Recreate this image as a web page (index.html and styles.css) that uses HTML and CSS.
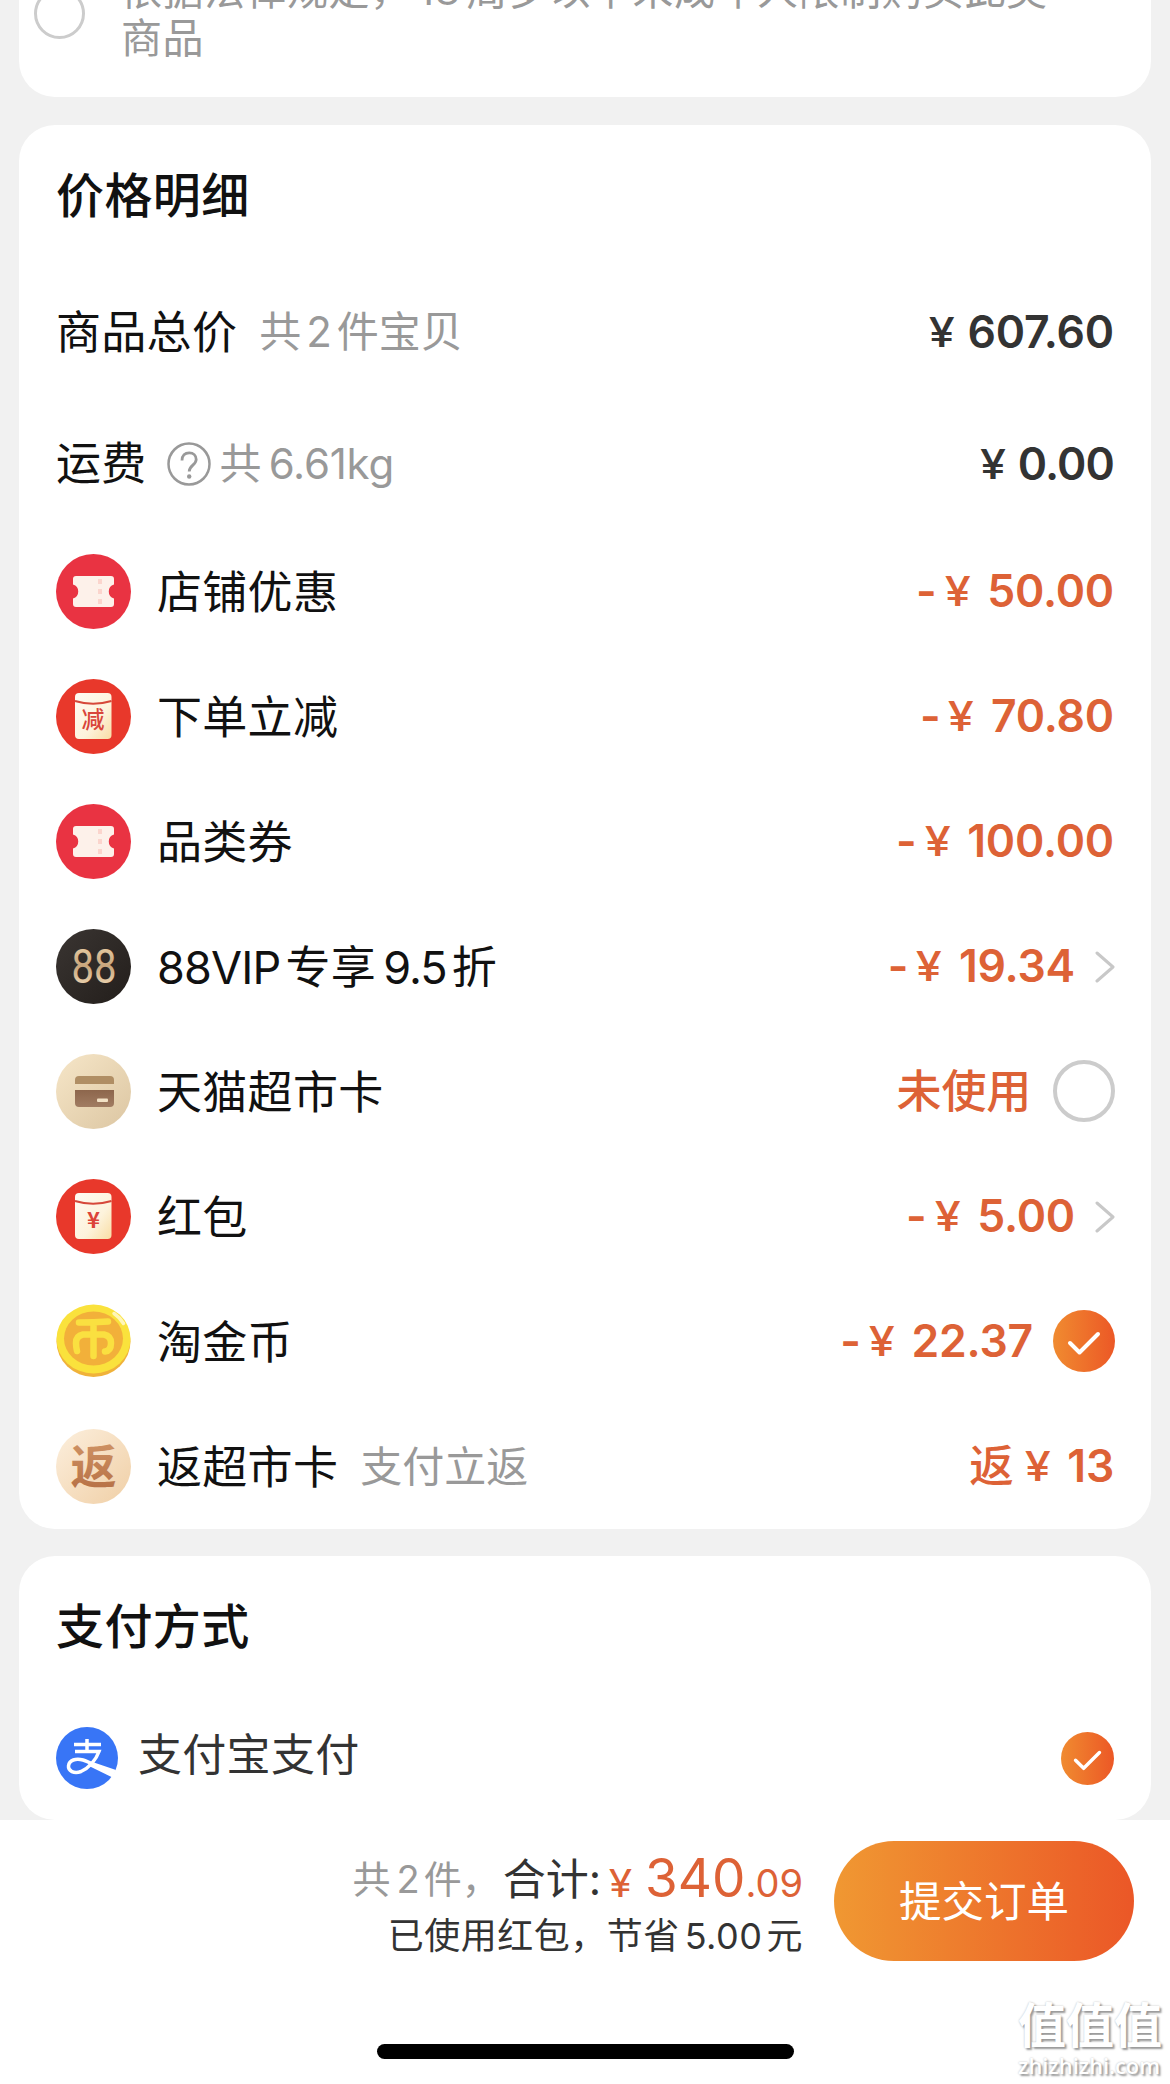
FILE: index.html
```
<!DOCTYPE html>
<html lang="zh-CN">
<head>
<meta charset="utf-8">
<title>确认订单</title>
<link rel="stylesheet" href="styles.css">
</head>
<body>
<svg class="defs" width="0" height="0" aria-hidden="true">
  <defs>
    <linearGradient id="orange" x1="0" x2="1" y1="0" y2="0"><stop offset="0" stop-color="#f08b30"/><stop offset="1" stop-color="#ec5826"/></linearGradient>
    <linearGradient id="paper" x1="0" x2="1" y1="0" y2="1"><stop offset="0" stop-color="#fffaf3"/><stop offset=".6" stop-color="#fdf3dc"/><stop offset="1" stop-color="#f9dda4"/></linearGradient>
    <linearGradient id="dark" x1="0" x2="1" y1="0" y2="1"><stop offset="0" stop-color="#3a3532"/><stop offset="1" stop-color="#231e1b"/></linearGradient>
    <linearGradient id="gold" x1="0" x2="0" y1="0" y2="1"><stop offset="0" stop-color="#f3dcb4"/><stop offset=".5" stop-color="#c9a67c"/><stop offset="1" stop-color="#fbe8c8"/></linearGradient>
    <linearGradient id="sand" x1="0" x2="1" y1="0" y2="1"><stop offset="0" stop-color="#f6e6c8"/><stop offset="1" stop-color="#dcc6a2"/></linearGradient>
    <linearGradient id="card-b" x1="0" x2="0" y1="0" y2="1"><stop offset="0" stop-color="#8d664c"/><stop offset="1" stop-color="#a17c62"/></linearGradient>
    <linearGradient id="peach" x1="0" x2="1" y1="0" y2="1"><stop offset="0" stop-color="#fcefdd"/><stop offset="1" stop-color="#f0cfa6"/></linearGradient>
    <linearGradient id="copper" x1="0" x2="0" y1="0" y2="1"><stop offset="0" stop-color="#d49a6b"/><stop offset="1" stop-color="#b46d42"/></linearGradient>
    <symbol id="ticket" viewBox="0 0 75 75">
      <circle cx="37.5" cy="37.5" r="37.5" fill="#e93342"/>
      <path d="M20 22h35q3 0 3 3v5.500a7.300 7.300 0 0 0 0 14v5.500q0 3-3 3H20q-3 0-3-3v-5.500a7.300 7.300 0 0 0 0-14V25q0-3 3-3z" fill="#fdf1ea"/>
      <path d="M44 25v26" stroke="#fbd5cd" stroke-width="4" stroke-dasharray="5 5"/>
    </symbol>
    <symbol id="envelope" viewBox="0 0 75 75">
      <circle cx="37.500" cy="37.500" r="37.500" fill="#e8382b"/>
      <rect x="19" y="14" width="36.500" height="46" rx="4" fill="url(#paper)"/>
      <path d="M19 22q18 5.500 36.500 0" fill="none" stroke="#d6483a" stroke-width="2"/>
    </symbol>
    <symbol id="check" viewBox="0 0 62 62">
      <circle cx="31" cy="31" r="31" fill="url(#orange)"/>
      <path d="M17 33l9.500 9.500L45 24" fill="none" stroke="#fff" stroke-width="4" stroke-linecap="round" stroke-linejoin="round"/>
    </symbol>
    <symbol id="chevron" viewBox="0 0 20 32"><path d="M2 2l16 14L2 30" fill="none" stroke="#c8c8c8" stroke-width="3" stroke-linecap="round" stroke-linejoin="round"/></symbol>
  </defs>
</svg>

<main class="page">
  <section class="card notice">
    <span class="radio radio-small"></span>
    <p class="notice-text">依据法律规定，<span class="n">18</span>周岁以下未成年人限制购买此类<br>商品</p>
  </section>

  <section class="card detail">
    <h2 class="title">价格明细</h2>
    <div class="row total">
      <span class="label">商品总价</span><span class="note">共<span class="n">2</span>件宝贝</span>
      <span class="amount black"><span class="yen">¥</span>607.60</span>
    </div>
    <div class="row freight">
      <span class="label">运费</span>
      <svg class="help" viewBox="0 0 44 44"><circle cx="22" cy="22" r="20.500" fill="none" stroke="#999" stroke-width="2.500"/><path d="M15 18.500c0-5 3-7.700 7.200-7.700s7 2.700 7 6.700c0 5.300-7 6-7 12" fill="none" stroke="#999" stroke-width="2.800"/><circle cx="22.200" cy="34.500" r="2.200" fill="#999"/></svg>
      <span class="note note-tight">共<span class="n">6.61kg</span></span>
      <span class="amount black"><span class="yen">¥</span>0.00</span>
    </div>
    <div class="row">
      <svg class="icon"><use href="#ticket"/></svg><span class="label">店铺优惠</span>
      <span class="amount"><span class="minus">-</span><span class="yen">¥</span>50.00</span>
    </div>
    <div class="row">
      <svg class="icon" viewBox="0 0 75 75"><use href="#envelope"/><text x="37" y="49" class="icon-text cut" font-size="23" fill="#d9453a">减</text></svg><span class="label">下单立减</span>
      <span class="amount"><span class="minus">-</span><span class="yen">¥</span>70.80</span>
    </div>
    <div class="row">
      <svg class="icon"><use href="#ticket"/></svg><span class="label">品类券</span>
      <span class="amount"><span class="minus">-</span><span class="yen">¥</span>100.00</span>
    </div>
    <div class="row">
      <svg class="icon" viewBox="0 0 75 75"><circle cx="37.500" cy="37.500" r="37.500" fill="url(#dark)"/><text x="15.500" y="53.500" class="eights" textLength="45" lengthAdjust="spacingAndGlyphs" fill="url(#gold)">88</text></svg><span class="label"><span class="vip">88VIP</span>专享<span class="n">9.5</span>折</span>
      <span class="amount inner"><span class="minus">-</span><span class="yen">¥</span>19.34</span><svg class="chevron"><use href="#chevron"/></svg>
    </div>
    <div class="row">
      <svg class="icon" viewBox="0 0 75 75"><circle cx="37.500" cy="37.500" r="37.500" fill="url(#sand)"/><path d="M19 30v-4q0-4 4-4h31q4 0 4 4v4z" fill="#b08e64"/><path d="M19 36h39v13q0 4-4 4H23q-4 0-4-4z" fill="url(#card-b)"/><rect x="41" y="44.500" width="11" height="3.500" rx="1" fill="#f3e2c6"/></svg><span class="label">天猫超市卡</span>
      <span class="amount unused">未使用</span><span class="radio"></span>
    </div>
    <div class="row">
      <svg class="icon" viewBox="0 0 75 75"><use href="#envelope"/><text x="37.500" y="49" class="icon-text" font-size="22" fill="#dc4338">¥</text></svg><span class="label">红包</span>
      <span class="amount inner"><span class="minus">-</span><span class="yen">¥</span>5.00</span><svg class="chevron"><use href="#chevron"/></svg>
    </div>
    <div class="row">
      <svg class="icon" viewBox="0 0 75 75"><ellipse cx="37.500" cy="37.500" rx="37" ry="35.500" fill="#f0b23a"/><ellipse cx="37.500" cy="35" rx="37" ry="34.500" fill="#fae23c"/><ellipse cx="37.500" cy="34.500" rx="29.500" ry="27" fill="#f2b03a"/><path d="M23 18.500q15 0 29-1M37.500 19v33M21 47q-1-4-1-8 0-7 7-8.500h21q7 1.500 7 8.500 0 8-6 8.500" fill="none" stroke="#fae040" stroke-width="6.500" stroke-linecap="round"/><path d="M58 9.500q6 4 9.500 10" stroke="#fff6b8" stroke-width="3.500" fill="none" stroke-linecap="round"/></svg><span class="label">淘金币</span>
      <span class="amount inner"><span class="minus">-</span><span class="yen">¥</span>22.37</span><svg class="tick"><use href="#check"/></svg>
    </div>
    <div class="row">
      <svg class="icon" viewBox="0 0 75 75"><circle cx="37.500" cy="37.500" r="37.500" fill="url(#peach)"/><text x="37.500" y="54" class="icon-text" font-size="46" fill="url(#copper)">返</text></svg><span class="label">返超市卡</span><span class="note">支付立返</span>
      <span class="amount"><span class="back">返</span><span class="yen">¥</span>13</span>
    </div>
  </section>

  <section class="card pay">
    <h2 class="title">支付方式</h2>
    <div class="row pay-row">
      <svg class="alipay" viewBox="0 0 62 62"><circle cx="31" cy="31" r="31" fill="#3875f6"/><path d="M18 17.500h27M31 12v12M19 24.500h24C40 33 33 41 25 44.500C18 47 12 44 12.500 39C13 33 20 31 27 33C32 34.500 38 38 42 40" fill="none" stroke="#fff" stroke-width="3.500"/><path d="M35 34.500l25 8.500-3.500 7.500L32 38.500z" fill="#fff"/></svg><span class="pay-name">支付宝支付</span>
      <svg class="tick tick-small" viewBox="0 0 62 62"><use href="#check"/></svg>
    </div>
  </section>
</main>

<footer class="bar">
  <div class="checkout">
    <div class="summary">
      <div class="sum-line"><span class="count">共<span class="n">2</span>件，</span><span class="sum-label">合计<span class="colon">:</span></span><span class="sum-yen">¥</span><span class="sum-int">340</span><span class="sum-dec">.09</span></div>
      <div class="saved">已使用红包，节省<span class="n">5.00</span>元</div>
    </div>
    <button class="submit">提交订单</button>
  </div>
  <div class="home"></div>
  <div class="mark"><span class="mark-cn">值值值</span><span class="mark-en">zhizhizhi.com</span></div>
</footer>
</body>
</html>
```
FILE: styles.css
```
* { box-sizing: border-box; }
html, body { margin: 0; }
body {
  width: 1170px;
  height: 2084px;
  overflow: hidden;
  display: flex;
  flex-direction: column;
  background: #f1f1f1;
  color: #111;
  font-family: Inter, "Noto Sans CJK SC", sans-serif;
}
.defs { position: absolute; }
h2, p { margin: 0; }
.page { height: 1820px; padding: 0 19px; display: flex; flex-direction: column; gap: 28px; overflow: hidden; }
.card { background: #fff; border-radius: 36px; flex: none; }
.n { margin: 0 5px; }

.notice { height: 97px; border-radius: 0 0 36px 36px; overflow: hidden; display: flex; align-items: flex-start; padding-left: 15px; }
.notice-text { margin: -34px 0 0 36px; white-space: nowrap; flex: none; font-size: 41px; line-height: 48px; letter-spacing: .5px; color: #999; }
.notice-text .n { margin: 0 6px; }
.radio { width: 62px; height: 62px; border: 4px solid #ccc; border-radius: 50%; flex: none; }
.radio-small { width: 51px; height: 51px; border-width: 3px; margin-top: -12px; }

.detail { height: 1404px; padding: 36px 36px 0 37px; }
.title { font-size: 48px; line-height: 70px; font-weight: 500; letter-spacing: .4px; height: 70px; white-space: nowrap; }
.row { display: flex; align-items: center; height: 125px; white-space: nowrap; }
.total { height: 132px; margin-top: 35px; }
.freight { height: 132px; margin-bottom: -1px; }
.icon { width: 75px; height: 75px; flex: none; margin-right: 26px; }
.icon-text { text-anchor: middle; font-weight: 700; font-family: "Noto Sans CJK SC", sans-serif; }
.icon-text.cut { font-weight: 500; }
.eights { font-size: 48px; font-weight: 400; font-family: Roboto, sans-serif; }
.label { font-size: 45px; line-height: 60px; letter-spacing: .3px; padding-top: 2px; }
.label .n { margin: 0 5px 0 7px; letter-spacing: -1px; }
.vip { margin-right: 5px; letter-spacing: -.8px; }
.note { font-size: 42px; line-height: 60px; color: #999; margin-left: 22px; }
.freight .label { padding-top: 0; }
.help { width: 44px; height: 44px; margin: 0 9px 0 20px; }
.note-tight { margin-left: 0; }
.note-tight .n { margin-left: 7px; letter-spacing: -.2px; }
.amount { margin-left: auto; padding-right: 1px; font-size: 44.5px; line-height: 60px; font-weight: 600; letter-spacing: -.2px; color: #dd6236; display: flex; align-items: baseline; }
.amount.inner { padding-right: 0; margin-right: -2px; }
.amount.black { color: #333; }
.freight .amount { letter-spacing: -.9px; }
.yen { font-size: 41px; font-weight: 500; margin-right: 17px; transform: translateY(-1px) scaleX(1.14); transform-origin: right; }
.black .yen { margin-right: 13px; }
.minus { margin-right: 11px; }
.unused, .back { font-weight: 500; }
.unused { font-size: 45px; padding: 1px 0 0; }
.back { margin-right: 14px; }
.chevron { width: 20px; height: 32px; margin-left: 22px; flex: none; }
.unused + .radio, .tick { margin-left: 22px; margin-bottom: 1px; }
.tick { width: 62px; height: 62px; flex: none; }

.pay { height: 264px; padding: 36px 36px 0 37px; margin-top: -1px; }
.pay-row { height: 124px; margin-top: 34px; }
.alipay { width: 62px; height: 62px; flex: none; margin-right: 20px; }
.pay-name { font-size: 44px; line-height: 60px; letter-spacing: .3px; color: #333; margin-top: -7px; }
.tick.tick-small { width: 53px; height: 53px; margin: 0 1px 0 auto; }

.bar { position: relative; height: 264px; background: #fff; }
.checkout { display: flex; justify-content: flex-end; gap: 31px; padding: 21px 36px 0 0; }
.summary { text-align: right; color: #333; white-space: nowrap; }
.sum-line { display: flex; align-items: baseline; justify-content: flex-end; line-height: 60px; height: 62px; margin-top: 7px; }
.count { font-size: 38px; color: #999; transform: translateY(-4px); }
.count .n { margin: 0 4px 0 6px; }
.sum-label { font-size: 43px; transform: translateY(-2px); margin-left: 3px; }
.sum-yen, .sum-int, .sum-dec { color: #dd6236; }
.sum-yen { font-size: 38px; margin: 0 14px 0 9px; transform: scaleX(1.12); }
.sum-int { font-size: 53px; }
.sum-dec { font-size: 38px; }
.saved { font-size: 36px; line-height: 50px; letter-spacing: .5px; padding-top: 1px; }
.saved .n { margin: 0 4px 0 5px; }
.submit { width: 300px; height: 120px; border: 0; padding: 1px 0 0; border-radius: 60px; background: linear-gradient(90deg, #f09832, #eb5727); color: #fff; font: 400 42.5px/119px Inter, "Noto Sans CJK SC", sans-serif; }
.home { width: 417px; height: 15px; border-radius: 8px; background: #000; margin: 83px 0 0 377px; }
.mark { position: absolute; right: 6px; top: 179px; width: 146px; color: #fff; text-shadow: 2px 2px 2px #999, 0 0 2px #bbb; white-space: nowrap; }
.mark-cn { display: block; font-size: 48px; line-height: 54px; font-weight: 700; }
.mark-en { display: block; font: 600 21.800px/25px "Open Sans", sans-serif; }
```
